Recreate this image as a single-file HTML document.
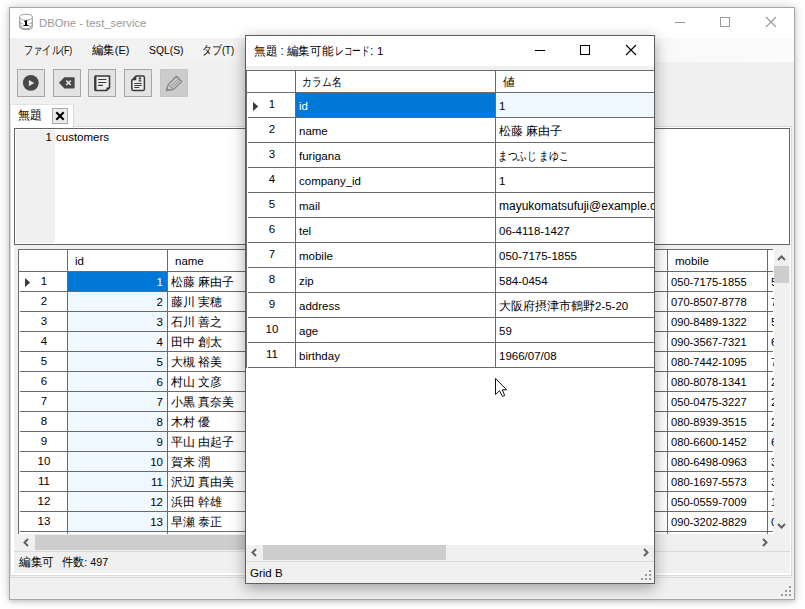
<!DOCTYPE html><html><head><meta charset="utf-8"><title>DBOne</title><style>
*{margin:0;padding:0;box-sizing:border-box}
html,body{width:805px;height:609px;overflow:hidden;background:#fff;font-family:"Liberation Sans",sans-serif;font-size:12px;color:#000}
.a{position:absolute}
.t{position:absolute;white-space:nowrap;line-height:14px;height:14px}
.hl{position:absolute;height:1px;background:#6a6a6a}
.vl{position:absolute;width:1px;background:#6a6a6a}
</style></head><body>
<div class="a" style="left:9px;top:7px;width:786px;height:593px;border:1px solid #a6a6a6;background:#f0f0f0;box-shadow:0 0 10px rgba(0,0,0,0.2),0 2px 4px rgba(0,0,0,0.12)"></div>
<div class="a" style="left:10px;top:8px;width:784px;height:30px;background:#fff"></div>
<svg class="a" style="left:18px;top:13px" width="16" height="18" viewBox="0 0 16 18">
<g fill="none" stroke="#a3a3a3" stroke-width="1.1">
<path d="M1.6 4.2 V13 Q1.6 16.6 8 16.6 Q14.4 16.6 14.4 13 V4.2"/>
<ellipse cx="8" cy="4.2" rx="6.4" ry="3" fill="#fff"/>
<path d="M1.6 8.6 Q1.6 10.4 4.5 10.8 M11.5 10.8 Q14.4 10.4 14.4 8.6 M1.6 11.4 Q1.6 13.2 4.5 13.6 M11.5 13.6 Q14.4 13.2 14.4 11.4 M3 15 Q8 16.4 13 15"/>
</g>
<path d="M6.2 8 L9.1 7 L9.1 11.9 L10.6 11.9 L10.6 12.9 L5.4 12.9 L5.4 11.9 L7 11.9 L7 8.9 L6.2 9.1 Z" fill="#000"/>
</svg>
<div class="t" style="left:39px;top:16px;font-size:11.3px;color:#999;">DBOne - test_service</div>
<div class="a" style="left:675px;top:22px;width:10px;height:1px;background:#999"></div>
<div class="a" style="left:720px;top:17px;width:10px;height:10px;border:1px solid #999"></div>
<svg class="a" style="left:765px;top:16px" width="12" height="12" viewBox="0 0 12 12"><path d="M1 1 L11 11 M11 1 L1 11" stroke="#999" stroke-width="1.1"/></svg>
<div class="a" style="left:10px;top:38px;width:784px;height:24px;background:linear-gradient(90deg,#f0f0f0,#fbfbfb)"></div>
<div class="t" style="left:23.5px;top:43px;font-size:11.5px;transform:scaleX(0.77);transform-origin:0 0;">ファイル(F)</div>
<div class="t" style="left:92px;top:43px;font-size:11.5px;transform:scaleX(0.95);transform-origin:0 0;">編集(E)</div>
<div class="t" style="left:149px;top:43px;font-size:11.5px;transform:scaleX(0.9);transform-origin:0 0;">SQL(S)</div>
<div class="t" style="left:202px;top:43px;font-size:11.5px;transform:scaleX(0.83);transform-origin:0 0;">タブ(T)</div>
<div class="a" style="left:17px;top:69px;width:28px;height:28px;border:1px solid #a6a6a6;background:#e3e3e3"></div>
<div class="a" style="left:53px;top:69px;width:28px;height:28px;border:1px solid #a6a6a6;background:#e3e3e3"></div>
<div class="a" style="left:88px;top:69px;width:28px;height:28px;border:1px solid #a6a6a6;background:#e3e3e3"></div>
<div class="a" style="left:124px;top:69px;width:28px;height:28px;border:1px solid #a6a6a6;background:#e3e3e3"></div>
<div class="a" style="left:160px;top:69px;width:28px;height:28px;border:1px solid #c6c6c6;background:#cccccc"></div>
<svg class="a" style="left:17px;top:69px" width="28" height="28" viewBox="0 0 28 28"><circle cx="13.8" cy="13.8" r="7.9" fill="#484848"/><path d="M11.9 10.9 L17.2 14 L11.9 17.2 Z" fill="#e3e3e3"/></svg>
<svg class="a" style="left:53px;top:69px" width="28" height="28" viewBox="0 0 28 28"><path d="M5.9 13.8 L11.4 8.2 L20.6 8.2 Q21.6 8.2 21.6 9.2 L21.6 18.5 Q21.6 19.5 20.6 19.5 L11.4 19.5 Z" fill="#484848"/><path d="M13.3 11.6 L17.7 16 M17.7 11.6 L13.3 16" stroke="#e3e3e3" stroke-width="1.6"/></svg>
<svg class="a" style="left:88px;top:69px" width="28" height="28" viewBox="0 0 28 28"><path d="M7.3 7 H21.5 V18.6 L18.6 21.5 H7.3 Z" fill="#ececec" stroke="#3a3a3a" stroke-width="1.6" stroke-linejoin="round"/><path d="M7.3 7.5 V21" stroke="#3a3a3a" stroke-width="2.2"/><path d="M10.2 10.5 H18.3 M10.2 13.5 H18.3 M10.2 16.4 H14.9" stroke="#3a3a3a" stroke-width="1.2"/><path d="M18.4 21.5 V18.4 H21.5 Z" fill="#3a3a3a"/></svg>
<svg class="a" style="left:124px;top:69px" width="28" height="28" viewBox="0 0 28 28"><path d="M12.3 6.9 H18.8 Q20.4 6.9 20.4 8.5 V19.9 Q20.4 21.5 18.8 21.5 H9.4 Q7.8 21.5 7.8 19.9 V11.2 Z" fill="#ececec" stroke="#3a3a3a" stroke-width="1.5" stroke-linejoin="round"/><path d="M7.8 11.3 L12.3 6.9 V11.3 Z" fill="#3a3a3a"/><circle cx="15.9" cy="9.4" r="1.2" fill="#3a3a3a"/><path d="M14.2 12.6 Q14.2 10.9 15.95 10.9 Q17.7 10.9 17.7 12.6 Z" fill="#3a3a3a"/><path d="M10.3 14.5 H17.7 M10.3 16.5 H17.7 M10.3 18.5 H15.3" stroke="#3a3a3a" stroke-width="1.1"/></svg>
<svg class="a" style="left:160px;top:69px" width="28" height="28" viewBox="0 0 28 28"><path d="M6.3 21.5 L8.2 15.6 L16.4 7.3 L21.8 12.4 L13.6 20.4 Z" fill="none" stroke="#858585" stroke-width="1.3" stroke-linejoin="round"/><path d="M8.2 15.6 L13.6 20.4 M10 17.5 L18.8 9.5 M11.6 19 L20.3 10.9" stroke="#858585" stroke-width="0.8"/><path d="M6.3 21.5 L7.1 18.8 L9.1 20.6 Z" fill="#858585"/></svg>
<div class="a" style="left:10px;top:104px;width:64px;height:23px;background:#fff;border-top:1px solid #e3e3e3;border-right:1px solid #d9d9d9;border-left:1px solid #e3e3e3"></div>
<div class="t" style="left:18px;top:108px;font-size:12px">無題</div>
<div class="a" style="left:52px;top:108px;width:16px;height:16px;border:1px solid #a6a6a6;background:#ececec"></div>
<svg class="a" style="left:52px;top:108px" width="16" height="16" viewBox="0 0 16 16"><path d="M4.3 4.3 L11.7 11.7 M11.7 4.3 L4.3 11.7" stroke="#000" stroke-width="2.2"/></svg>
<div class="a" style="left:74px;top:126px;width:718px;height:1px;background:#d9d9d9"></div>
<div class="a" style="left:10px;top:127px;width:781px;height:448px;background:#fff"></div>
<div class="a" style="left:791px;top:126px;width:1px;height:450px;background:#d9d9d9"></div>
<div class="a" style="left:10px;top:127px;width:1px;height:449px;background:#d9d9d9"></div>
<div class="a" style="left:10px;top:575px;width:782px;height:1px;background:#d9d9d9"></div>
<div class="a" style="left:10px;top:577px;width:783px;height:1px;background:#d9d9d9"></div>
<div class="a" style="left:14px;top:128px;width:776px;height:117px;border:1px solid #646464;background:#fff"></div>
<div class="a" style="left:16px;top:130px;width:39px;height:113px;background:#f0f0f0"></div>
<div class="t" style="left:30px;top:130px;width:22px;text-align:right;font-size:11.5px">1</div>
<div class="t" style="left:56px;top:130px;font-size:11.5px">customers</div>
<div class="a" style="left:14px;top:245px;width:776px;height:328px;background:#f0f0f0"></div>
<div class="a" style="left:18px;top:249px;width:756px;height:285px;background:#fff;overflow:hidden">
<div class="a" style="left:50px;top:23px;width:99px;height:260px;background:#f0f8ff"></div>
<div class="a" style="left:50px;top:23px;width:99px;height:19px;background:#0078d7"></div>
<div class="hl" style="left:0;top:0;width:755px"></div>
<div class="hl" style="left:0px;top:22px;width:755px"></div>
<div class="hl" style="left:2px;top:42px;width:753px"></div>
<div class="hl" style="left:2px;top:62px;width:753px"></div>
<div class="hl" style="left:2px;top:82px;width:753px"></div>
<div class="hl" style="left:2px;top:102px;width:753px"></div>
<div class="hl" style="left:2px;top:122px;width:753px"></div>
<div class="hl" style="left:2px;top:142px;width:753px"></div>
<div class="hl" style="left:2px;top:162px;width:753px"></div>
<div class="hl" style="left:2px;top:182px;width:753px"></div>
<div class="hl" style="left:2px;top:202px;width:753px"></div>
<div class="hl" style="left:2px;top:222px;width:753px"></div>
<div class="hl" style="left:2px;top:242px;width:753px"></div>
<div class="hl" style="left:2px;top:262px;width:753px"></div>
<div class="hl" style="left:2px;top:282px;width:753px"></div>
<div class="vl" style="left:0px;top:0;height:285px"></div>
<div class="vl" style="left:49px;top:0;height:285px"></div>
<div class="vl" style="left:149px;top:0;height:285px"></div>
<div class="vl" style="left:649px;top:0;height:285px"></div>
<div class="vl" style="left:749px;top:0;height:285px"></div>
<div class="t" style="left:57px;top:5px;font-size:11.5px">id</div>
<div class="t" style="left:157px;top:5px;font-size:11.5px">name</div>
<div class="t" style="left:657px;top:5px;font-size:11.5px">mobile</div>
<div class="t" style="left:12px;top:25px;width:28px;text-align:center;font-size:11.5px">1</div>
<div class="t" style="left:52px;top:26px;width:93px;text-align:right;font-size:11.5px;color:#fff">1</div>
<div class="t" style="left:153px;top:26px;font-size:12px">松藤 麻由子</div>
<div class="t" style="left:653px;top:26px;font-size:11.5px;transform:scaleX(0.97);transform-origin:0 0;">050-7175-1855</div>
<div class="t" style="left:753px;top:26px;font-size:11.5px">584-0454</div>
<div class="t" style="left:12px;top:45px;width:28px;text-align:center;font-size:11.5px">2</div>
<div class="t" style="left:52px;top:46px;width:93px;text-align:right;font-size:11.5px;color:#000">2</div>
<div class="t" style="left:153px;top:46px;font-size:12px">藤川 実穂</div>
<div class="t" style="left:653px;top:46px;font-size:11.5px;transform:scaleX(0.97);transform-origin:0 0;">070-8507-8778</div>
<div class="t" style="left:753px;top:46px;font-size:11.5px">715-0021</div>
<div class="t" style="left:12px;top:65px;width:28px;text-align:center;font-size:11.5px">3</div>
<div class="t" style="left:52px;top:66px;width:93px;text-align:right;font-size:11.5px;color:#000">3</div>
<div class="t" style="left:153px;top:66px;font-size:12px">石川 善之</div>
<div class="t" style="left:653px;top:66px;font-size:11.5px;transform:scaleX(0.97);transform-origin:0 0;">090-8489-1322</div>
<div class="t" style="left:753px;top:66px;font-size:11.5px">520-0111</div>
<div class="t" style="left:12px;top:85px;width:28px;text-align:center;font-size:11.5px">4</div>
<div class="t" style="left:52px;top:86px;width:93px;text-align:right;font-size:11.5px;color:#000">4</div>
<div class="t" style="left:153px;top:86px;font-size:12px">田中 創太</div>
<div class="t" style="left:653px;top:86px;font-size:11.5px;transform:scaleX(0.97);transform-origin:0 0;">090-3567-7321</div>
<div class="t" style="left:753px;top:86px;font-size:11.5px">611-0002</div>
<div class="t" style="left:12px;top:105px;width:28px;text-align:center;font-size:11.5px">5</div>
<div class="t" style="left:52px;top:106px;width:93px;text-align:right;font-size:11.5px;color:#000">5</div>
<div class="t" style="left:153px;top:106px;font-size:12px">大槻 裕美</div>
<div class="t" style="left:653px;top:106px;font-size:11.5px;transform:scaleX(0.97);transform-origin:0 0;">080-7442-1095</div>
<div class="t" style="left:753px;top:106px;font-size:11.5px">740-0012</div>
<div class="t" style="left:12px;top:125px;width:28px;text-align:center;font-size:11.5px">6</div>
<div class="t" style="left:52px;top:126px;width:93px;text-align:right;font-size:11.5px;color:#000">6</div>
<div class="t" style="left:153px;top:126px;font-size:12px">村山 文彦</div>
<div class="t" style="left:653px;top:126px;font-size:11.5px;transform:scaleX(0.97);transform-origin:0 0;">080-8078-1341</div>
<div class="t" style="left:753px;top:126px;font-size:11.5px">220-0001</div>
<div class="t" style="left:12px;top:145px;width:28px;text-align:center;font-size:11.5px">7</div>
<div class="t" style="left:52px;top:146px;width:93px;text-align:right;font-size:11.5px;color:#000">7</div>
<div class="t" style="left:153px;top:146px;font-size:12px">小黒 真奈美</div>
<div class="t" style="left:653px;top:146px;font-size:11.5px;transform:scaleX(0.97);transform-origin:0 0;">050-0475-3227</div>
<div class="t" style="left:753px;top:146px;font-size:11.5px">252-0101</div>
<div class="t" style="left:12px;top:165px;width:28px;text-align:center;font-size:11.5px">8</div>
<div class="t" style="left:52px;top:166px;width:93px;text-align:right;font-size:11.5px;color:#000">8</div>
<div class="t" style="left:153px;top:166px;font-size:12px">木村 優</div>
<div class="t" style="left:653px;top:166px;font-size:11.5px;transform:scaleX(0.97);transform-origin:0 0;">080-8939-3515</div>
<div class="t" style="left:753px;top:166px;font-size:11.5px">276-0001</div>
<div class="t" style="left:12px;top:185px;width:28px;text-align:center;font-size:11.5px">9</div>
<div class="t" style="left:52px;top:186px;width:93px;text-align:right;font-size:11.5px;color:#000">9</div>
<div class="t" style="left:153px;top:186px;font-size:12px">平山 由起子</div>
<div class="t" style="left:653px;top:186px;font-size:11.5px;transform:scaleX(0.97);transform-origin:0 0;">080-6600-1452</div>
<div class="t" style="left:753px;top:186px;font-size:11.5px">600-8000</div>
<div class="t" style="left:12px;top:205px;width:28px;text-align:center;font-size:11.5px">10</div>
<div class="t" style="left:52px;top:206px;width:93px;text-align:right;font-size:11.5px;color:#000">10</div>
<div class="t" style="left:153px;top:206px;font-size:12px">賀来 潤</div>
<div class="t" style="left:653px;top:206px;font-size:11.5px;transform:scaleX(0.97);transform-origin:0 0;">080-6498-0963</div>
<div class="t" style="left:753px;top:206px;font-size:11.5px">330-0001</div>
<div class="t" style="left:12px;top:225px;width:28px;text-align:center;font-size:11.5px">11</div>
<div class="t" style="left:52px;top:226px;width:93px;text-align:right;font-size:11.5px;color:#000">11</div>
<div class="t" style="left:153px;top:226px;font-size:12px">沢辺 真由美</div>
<div class="t" style="left:653px;top:226px;font-size:11.5px;transform:scaleX(0.97);transform-origin:0 0;">080-1697-5573</div>
<div class="t" style="left:753px;top:226px;font-size:11.5px">350-0001</div>
<div class="t" style="left:12px;top:245px;width:28px;text-align:center;font-size:11.5px">12</div>
<div class="t" style="left:52px;top:246px;width:93px;text-align:right;font-size:11.5px;color:#000">12</div>
<div class="t" style="left:153px;top:246px;font-size:12px">浜田 幹雄</div>
<div class="t" style="left:653px;top:246px;font-size:11.5px;transform:scaleX(0.97);transform-origin:0 0;">050-0559-7009</div>
<div class="t" style="left:753px;top:246px;font-size:11.5px">170-0001</div>
<div class="t" style="left:12px;top:265px;width:28px;text-align:center;font-size:11.5px">13</div>
<div class="t" style="left:52px;top:266px;width:93px;text-align:right;font-size:11.5px;color:#000">13</div>
<div class="t" style="left:153px;top:266px;font-size:12px">早瀬 泰正</div>
<div class="t" style="left:653px;top:266px;font-size:11.5px;transform:scaleX(0.97);transform-origin:0 0;">090-3202-8829</div>
<div class="t" style="left:753px;top:266px;font-size:11.5px">030-0001</div>
<svg class="a" style="left:7px;top:29px" width="6" height="9" viewBox="0 0 6 9"><path d="M0 0 L5.2 4.5 L0 9 Z" fill="#3a3a3a"/></svg>
</div>
<div class="a" style="left:774px;top:249px;width:16px;height:285px;background:#f0f0f0"></div>
<svg class="a" style="left:777px;top:254px" width="9" height="8" viewBox="0 0 9 8"><path d="M1 6 L4.5 2.5 L8 6" fill="none" stroke="#606060" stroke-width="2"/></svg>
<div class="a" style="left:774px;top:266px;width:15px;height:17px;background:#cdcdcd"></div>
<svg class="a" style="left:777px;top:522px" width="9" height="8" viewBox="0 0 9 8"><path d="M1 2 L4.5 5.5 L8 2" fill="none" stroke="#606060" stroke-width="2"/></svg>
<div class="a" style="left:18px;top:534px;width:755px;height:17px;background:#f0f0f0"></div>
<svg class="a" style="left:21.7px;top:538px" width="9" height="9" viewBox="0 0 9 9"><path d="M6 1 L2.5 4.5 L6 8" fill="none" stroke="#606060" stroke-width="2"/></svg>
<div class="a" style="left:35px;top:535px;width:420px;height:15px;background:#cdcdcd"></div>
<svg class="a" style="left:760px;top:538px" width="9" height="9" viewBox="0 0 9 9"><path d="M3 1 L6.5 4.5 L3 8" fill="none" stroke="#606060" stroke-width="2"/></svg>
<div class="a" style="left:14px;top:551px;width:776px;height:1px;background:#d9d9d9"></div>
<div class="t" style="left:18.5px;top:555px;font-size:11.5px;transform:scaleX(0.97);transform-origin:0 0;">編集可</div>
<div class="t" style="left:61.5px;top:555px;font-size:11.5px;transform:scaleX(0.93);transform-origin:0 0;">件数: 497</div>
<div class="a" style="left:789px;top:586px;width:2px;height:2px;background:#9a9a9a"></div>
<div class="a" style="left:785px;top:590px;width:2px;height:2px;background:#9a9a9a"></div>
<div class="a" style="left:789px;top:590px;width:2px;height:2px;background:#9a9a9a"></div>
<div class="a" style="left:781px;top:594px;width:2px;height:2px;background:#9a9a9a"></div>
<div class="a" style="left:785px;top:594px;width:2px;height:2px;background:#9a9a9a"></div>
<div class="a" style="left:789px;top:594px;width:2px;height:2px;background:#9a9a9a"></div>
<div class="a" style="left:245px;top:35px;width:410px;height:549px;border:1px solid #5f5f5f;background:#f0f0f0;box-shadow:0 4px 14px rgba(0,0,0,0.35)"></div>
<div class="a" style="left:246px;top:36px;width:408px;height:30px;background:#fff"></div>
<div class="t" style="left:254px;top:44px;font-size:12px;transform:scaleX(0.967);transform-origin:0 0;">無題 : 編集可能</div>
<div class="t" style="left:334.5px;top:44px;font-size:12px;transform:scaleX(0.72);transform-origin:0 0;">レコード</div>
<div class="t" style="left:370px;top:44px;font-size:12px;">:</div>
<div class="t" style="left:377px;top:44px;font-size:11.5px;">1</div>
<div class="a" style="left:535px;top:50px;width:10px;height:1px;background:#000"></div>
<div class="a" style="left:580px;top:45px;width:10px;height:10px;border:1px solid #000"></div>
<svg class="a" style="left:625px;top:44px" width="12" height="12" viewBox="0 0 12 12"><path d="M1 1 L11 11 M11 1 L1 11" stroke="#000" stroke-width="1.1"/></svg>
<div class="a" style="left:246px;top:70px;width:408px;height:475px;background:#fff;overflow:hidden">
<div class="a" style="left:250px;top:23px;width:158px;height:24px;background:#f0f8ff"></div>
<div class="a" style="left:50px;top:23px;width:199px;height:24px;background:#0078d7"></div>
<div class="hl" style="left:0;top:0;width:408px"></div>
<div class="hl" style="left:0px;top:22px;width:408px"></div>
<div class="hl" style="left:2px;top:47px;width:408px"></div>
<div class="hl" style="left:2px;top:72px;width:408px"></div>
<div class="hl" style="left:2px;top:97px;width:408px"></div>
<div class="hl" style="left:2px;top:122px;width:408px"></div>
<div class="hl" style="left:2px;top:147px;width:408px"></div>
<div class="hl" style="left:2px;top:172px;width:408px"></div>
<div class="hl" style="left:2px;top:197px;width:408px"></div>
<div class="hl" style="left:2px;top:222px;width:408px"></div>
<div class="hl" style="left:2px;top:247px;width:408px"></div>
<div class="hl" style="left:2px;top:272px;width:408px"></div>
<div class="hl" style="left:2px;top:297px;width:408px"></div>
<div class="vl" style="left:0px;top:0;height:298px"></div>
<div class="vl" style="left:49px;top:0;height:298px"></div>
<div class="vl" style="left:249px;top:0;height:298px"></div>
<div class="t" style="left:56px;top:5px;font-size:12px;transform:scaleX(0.82);transform-origin:0 0;">カラム名</div>
<div class="t" style="left:257px;top:5px;font-size:12px">値</div>
<div class="t" style="left:12px;top:27px;width:28px;text-align:center;font-size:11.5px">1</div>
<div class="t" style="left:53px;top:29px;font-size:11.5px;color:#fff">id</div>
<div class="t" style="left:253px;top:29px;font-size:11.5px;">1</div>
<div class="t" style="left:12px;top:52px;width:28px;text-align:center;font-size:11.5px">2</div>
<div class="t" style="left:53px;top:54px;font-size:11.5px;color:#000">name</div>
<div class="t" style="left:253px;top:54px;font-size:11.5px;">松藤 麻由子</div>
<div class="t" style="left:12px;top:77px;width:28px;text-align:center;font-size:11.5px">3</div>
<div class="t" style="left:53px;top:79px;font-size:11.5px;color:#000">furigana</div>
<div class="t" style="left:251.5px;top:79px;font-size:11.5px;transform:scaleX(0.81);transform-origin:0 0;">まつふじ まゆこ</div>
<div class="t" style="left:12px;top:102px;width:28px;text-align:center;font-size:11.5px">4</div>
<div class="t" style="left:53px;top:104px;font-size:11.5px;color:#000">company_id</div>
<div class="t" style="left:253px;top:104px;font-size:11.5px;">1</div>
<div class="t" style="left:12px;top:127px;width:28px;text-align:center;font-size:11.5px">5</div>
<div class="t" style="left:53px;top:129px;font-size:11.5px;color:#000">mail</div>
<div class="t" style="left:253px;top:129px;font-size:12px;">mayukomatsufuji@example.com</div>
<div class="t" style="left:12px;top:152px;width:28px;text-align:center;font-size:11.5px">6</div>
<div class="t" style="left:53px;top:154px;font-size:11.5px;color:#000">tel</div>
<div class="t" style="left:253px;top:154px;font-size:11.5px;">06-4118-1427</div>
<div class="t" style="left:12px;top:177px;width:28px;text-align:center;font-size:11.5px">7</div>
<div class="t" style="left:53px;top:179px;font-size:11.5px;color:#000">mobile</div>
<div class="t" style="left:253px;top:179px;font-size:11.5px;">050-7175-1855</div>
<div class="t" style="left:12px;top:202px;width:28px;text-align:center;font-size:11.5px">8</div>
<div class="t" style="left:53px;top:204px;font-size:11.5px;color:#000">zip</div>
<div class="t" style="left:253px;top:204px;font-size:11.5px;">584-0454</div>
<div class="t" style="left:12px;top:227px;width:28px;text-align:center;font-size:11.5px">9</div>
<div class="t" style="left:53px;top:229px;font-size:11.5px;color:#000">address</div>
<div class="t" style="left:253px;top:229px;font-size:11.5px;">大阪府摂津市鶴野2-5-20</div>
<div class="t" style="left:12px;top:252px;width:28px;text-align:center;font-size:11.5px">10</div>
<div class="t" style="left:53px;top:254px;font-size:11.5px;color:#000">age</div>
<div class="t" style="left:253px;top:254px;font-size:11.5px;">59</div>
<div class="t" style="left:12px;top:277px;width:28px;text-align:center;font-size:11.5px">11</div>
<div class="t" style="left:53px;top:279px;font-size:11.5px;color:#000">birthday</div>
<div class="t" style="left:253px;top:279px;font-size:11.5px;">1966/07/08</div>
<svg class="a" style="left:7px;top:32px" width="6" height="9" viewBox="0 0 6 9"><path d="M0 0 L5.2 4.5 L0 9 Z" fill="#3a3a3a"/></svg>
</div>
<div class="a" style="left:246px;top:545px;width:408px;height:16px;background:#f0f0f0"></div>
<svg class="a" style="left:250px;top:548px" width="9" height="9" viewBox="0 0 9 9"><path d="M6 1 L2.5 4.5 L6 8" fill="none" stroke="#606060" stroke-width="2"/></svg>
<div class="a" style="left:263px;top:545px;width:183px;height:15px;background:#cdcdcd"></div>
<svg class="a" style="left:641px;top:548px" width="9" height="9" viewBox="0 0 9 9"><path d="M3 1 L6.5 4.5 L3 8" fill="none" stroke="#606060" stroke-width="2"/></svg>
<div class="a" style="left:246px;top:561px;width:408px;height:1px;background:#d9d9d9"></div>
<div class="t" style="left:250px;top:566px;font-size:11.5px">Grid B</div>
<div class="a" style="left:649px;top:570px;width:2px;height:2px;background:#9a9a9a"></div>
<div class="a" style="left:645px;top:574px;width:2px;height:2px;background:#9a9a9a"></div>
<div class="a" style="left:649px;top:574px;width:2px;height:2px;background:#9a9a9a"></div>
<div class="a" style="left:641px;top:578px;width:2px;height:2px;background:#9a9a9a"></div>
<div class="a" style="left:645px;top:578px;width:2px;height:2px;background:#9a9a9a"></div>
<div class="a" style="left:649px;top:578px;width:2px;height:2px;background:#9a9a9a"></div>
<svg class="a" style="left:494px;top:377px" width="14" height="22" viewBox="0 0 14 22"><path d="M1.5 1.5 L1.5 17.5 L5.5 13.7 L8.5 19.5 L10.7 18.5 L8.3 12.8 L12.7 12.8 Z" fill="#fff" stroke="#111" stroke-width="1" stroke-linejoin="round"/></svg>
</body></html>
